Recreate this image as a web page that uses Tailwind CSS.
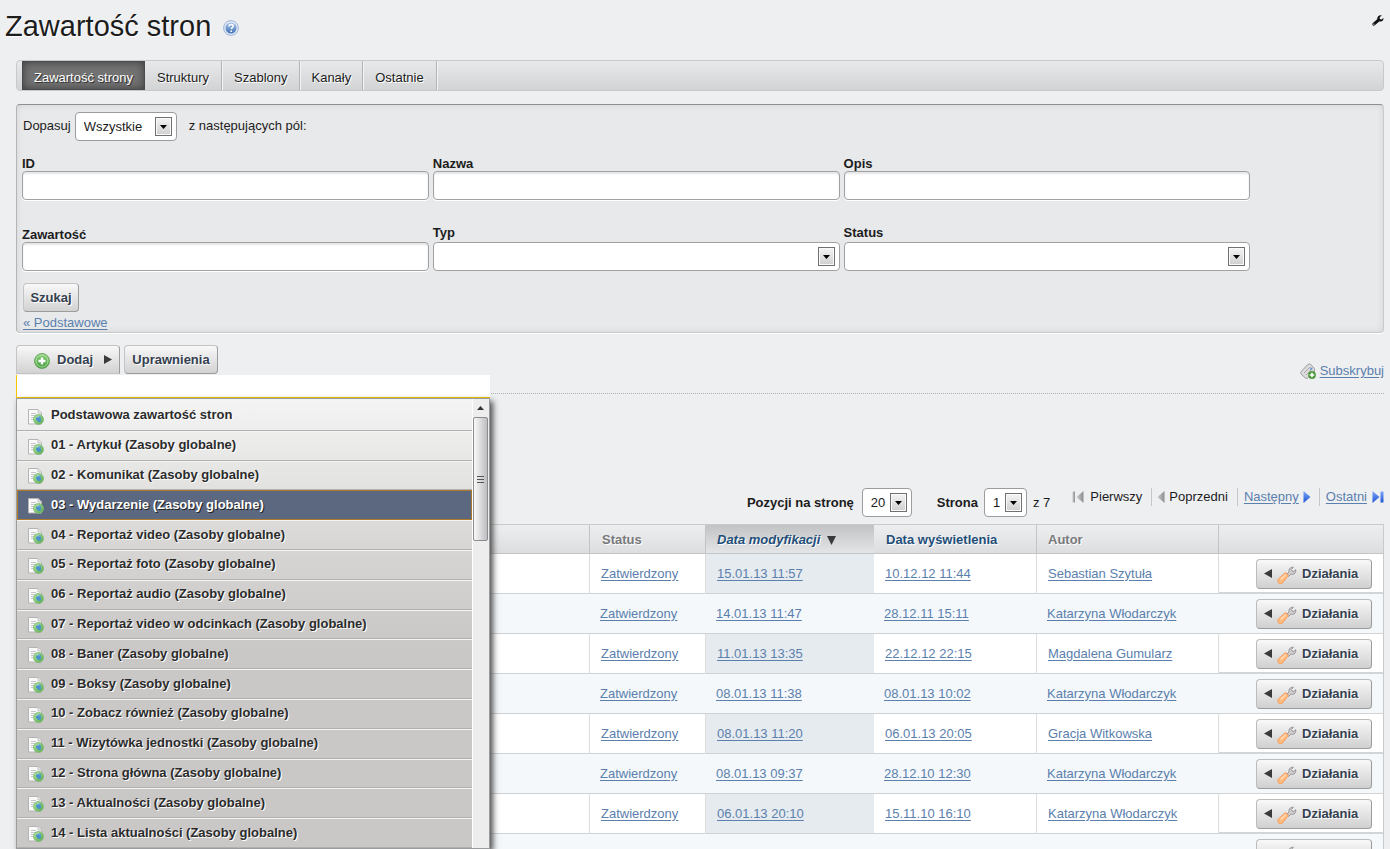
<!DOCTYPE html>
<html lang="pl">
<head>
<meta charset="utf-8">
<meta name="viewport" content="width=device-width, initial-scale=1">
<title>Zawartość stron</title>
<script src="https://cdn.jsdelivr.net/npm/@tailwindcss/browser@4"></script>
</head>
<body class="h-screen overflow-hidden bg-[#eeeff1] font-['Liberation_Sans',Arial,sans-serif] text-[13px] leading-4 text-[#1c1c1c]">

<svg width="0" height="0" class="absolute" aria-hidden="true">
  <defs>
    <linearGradient id="gBlue" x1="0" y1="0" x2="0" y2="1"><stop offset="0" stop-color="#a9c4e8"/><stop offset="1" stop-color="#4272b5"/></linearGradient>
    <linearGradient id="gGreen" x1="0" y1="0" x2="0" y2="1"><stop offset="0" stop-color="#8fd07c"/><stop offset="1" stop-color="#3f9a37"/></linearGradient>
    <linearGradient id="gGlobe" x1="0" y1="0" x2="1" y2="1"><stop offset="0" stop-color="#b4e4a0"/><stop offset="1" stop-color="#55a94e"/></linearGradient>
    <linearGradient id="gGrey" x1="0" y1="0" x2="1" y2="0"><stop offset="0" stop-color="#c9c9c9"/><stop offset="1" stop-color="#8e8e8e"/></linearGradient>
    <linearGradient id="gArrow" x1="0" y1="0" x2="0" y2="1"><stop offset="0" stop-color="#7fa9fa"/><stop offset="1" stop-color="#1d52cf"/></linearGradient>
  </defs>
  <symbol id="page" viewBox="0 0 16 16">
    <path d="M.5.5h9.500l3.500 3.500v11H.5z" fill="#fafafa" stroke="#b4b4b4"/>
    <path d="M10 .5V4h3.500" fill="#e8e8e8" stroke="#c4c4c4"/>
    <path d="M3 4.500h5M3 6.500h7M3 8.500h3M3 10.500h2" stroke="#c4c7ca"/>
    <circle cx="10.500" cy="10.500" r="5" fill="url(#gGlobe)" stroke="#7db974" stroke-width=".8"/>
    <path d="M10 7.500c1.800-.8 3 .5 2.700 1.600-.4 1 .8 1.800.2 2.900-.8 1.200-2.500 1.600-3.200.4-.3-.9-1.900-1-1.700-2.300.2-1.200 1-2 2-2.600z" fill="#4a8fd0"/>
    <path d="M9 8.500c.8-1 1.800-1 2.500-.3" stroke="#c7e8f5" stroke-width=".8" fill="none"/>
  </symbol>
  <symbol id="tool" viewBox="0 0 20 18">
    <path d="M9.500 8.500 12 6.200c-.6-2 .4-4.400 3-5 .6-.1 1 0 1.400.1l-1.900 2 .5 1.700 1.700.5 2-1.800c.6 2.300-.9 4.500-3.200 4.700-.7 0-1.200-.1-1.700-.3L11.500 10.500z" fill="#cfcfcf" stroke="#8d8d8d" stroke-width=".9"/>
    <path d="M1.600 12.800 7.600 7.200c1.400-1 4.200 1.500 3.200 3.100L5.700 16.700c-1.400 1.400-3.400 1.200-4.400-.2-.9-1.200-.8-2.600.3-3.700z" fill="#ffbd82" stroke="#f59a55"/>
    <path d="M3.500 13.500 8.500 9" stroke="#ffdcb8" stroke-width="1.300"/>
  </symbol>
  <symbol id="left" viewBox="0 0 8 9"><path d="M8 0v9L0 4.500z" fill="#3a3a3a"/></symbol>
</svg>

<header class="flex h-[60px] items-start justify-between pl-[5px] pr-[6px]">
  <div class="flex items-center gap-2 pt-[5px]">
    <h1 class="text-[29px] leading-[42px] [text-shadow:1px_1px_0_#fff]">Zawartość stron</h1>
    <a href="#" aria-label="Pomoc" class="mt-1 ml-1">
      <svg width="16" height="16" viewBox="0 0 16 16"><circle cx="8" cy="8" r="7.400" fill="#e4ecf6" stroke="#91acd2" stroke-width=".9"/><circle cx="8" cy="8" r="5.600" fill="url(#gBlue)"/><path d="M6 6.500C6 5.100 6.900 4.500 8.100 4.500c1.300 0 2.100.7 2.100 1.700 0 1.400-1.900 1.500-1.900 2.900" fill="none" stroke="#fff" stroke-width="1.500"/><circle cx="8.300" cy="11.200" r=".9" fill="#fff"/></svg>
    </a>
  </div>
  <button aria-label="Opcje" class="mt-[15px]">
    <svg width="12" height="11" viewBox="0 0 12 11"><path d="M1.900 9.200 6.200 5.400" stroke="#111" stroke-width="3" stroke-linecap="round"/><path d="M9.700.4C7.200-.3 4.900 1.600 5.300 4.100 5.700 6.300 8.200 7.200 10.200 5.900c1-.7 1.400-1.600 1.300-2.800L9.500 4.500 7.800 3.900l-.1-1.700z" fill="#111"/><circle cx="1.900" cy="9.200" r=".6" fill="#eee"/></svg>
  </button>
</header>

<main class="pl-4 pr-[6px]">
  <nav class="flex h-[31px] rounded-[4px] border border-[#c8c9ca] bg-linear-to-b from-[#e8e9ea] to-[#d2d3d4] pl-[5px] leading-[34px] [text-shadow:1px_1px_0_#fff]">
    <a href="#" class="border border-[#4b4b4b] bg-[#727272] px-[11px] leading-8 text-white shadow-[inset_0_0_9px_#3c3c3c] [text-shadow:1px_1px_0_#333]">Zawartość strony</a>
    <a href="#" class="border-r border-[#b3b4b5] px-3 shadow-[1px_0_0_#f4f4f4]">Struktury</a>
    <a href="#" class="border-r border-[#b3b4b5] px-3 shadow-[1px_0_0_#f4f4f4]">Szablony</a>
    <a href="#" class="border-r border-[#b3b4b5] px-[11px] shadow-[1px_0_0_#f4f4f4]">Kanały</a>
    <a href="#" class="border-r border-[#b3b4b5] px-3 shadow-[1px_0_0_#f4f4f4]">Ostatnie</a>
  </nav>

  <form class="mt-[13px] h-[229px] rounded-[4px] border border-[#c9cacb] border-t-[#8f9191] border-l-[#b4b5b6] bg-[#e8e9eb] px-[5px] pt-[7px] shadow-[inset_0_0_6px_#d2d3d4,0_1px_0_#fff]">
    <div class="flex items-start">
      <label for="match" class="mr-1 ml-[1px] pt-[6px]">Dopasuj</label>
      <div class="relative">
        <select id="match" class="h-[29px] w-[102px] appearance-none rounded-[4px] border border-[#9b9c9d] bg-white px-2 text-[13px] text-[#1c1c1c]"><option>Wszystkie</option></select>
        <span class="pointer-events-none absolute top-[5px] right-[5px] flex h-[19px] w-[17px] items-center justify-center border border-[#707070] bg-linear-to-b from-[#f4f4f4] to-[#cfcfcf] shadow-[inset_0_0_0_1px_#fafafa]"><svg width="7" height="4" viewBox="0 0 7 4"><path d="M0 0h7L3.500 4z"/></svg></span>
      </div>
      <span class="ml-3 pt-[6px]">z następujących pól:</span>
    </div>
    <div class="grid grid-cols-[30%_30%_30%] gap-x-1 gap-y-[26px] pt-[14px] font-bold">
      <div class="h-[45px]"><label for="fid" class="block h-4 leading-[18px]">ID</label><input id="fid" type="text" class="block h-[29px] w-full rounded-[4px] border border-[#a0a1a2] bg-white px-2 font-normal shadow-[inset_0_2px_2px_#e6e6e6,0_1px_0_#fff]"></div>
      <div class="h-[45px]"><label for="fname" class="block h-4 leading-[18px]">Nazwa</label><input id="fname" type="text" class="block h-[29px] w-full rounded-[4px] border border-[#a0a1a2] bg-white px-2 font-normal shadow-[inset_0_2px_2px_#e6e6e6,0_1px_0_#fff]"></div>
      <div class="h-[45px]"><label for="fdesc" class="block h-4 leading-[18px]">Opis</label><input id="fdesc" type="text" class="block h-[29px] w-full rounded-[4px] border border-[#a0a1a2] bg-white px-2 font-normal shadow-[inset_0_2px_2px_#e6e6e6,0_1px_0_#fff]"></div>
      <div class="h-[45px]"><label for="fcont" class="block h-4 leading-[18px]">Zawartość</label><input id="fcont" type="text" class="block h-[29px] w-full rounded-[4px] border border-[#a0a1a2] bg-white px-2 font-normal shadow-[inset_0_2px_2px_#e6e6e6,0_1px_0_#fff]"></div>
      <div class="relative h-[45px]"><label for="ftype" class="block h-4 leading-[14px]">Typ</label><select id="ftype" class="block h-[29px] w-full appearance-none rounded-[4px] border border-[#a0a1a2] bg-white px-2 font-normal"><option></option></select>
        <span class="pointer-events-none absolute right-[5px] bottom-[5px] flex h-[19px] w-[17px] items-center justify-center border border-[#707070] bg-linear-to-b from-[#f4f4f4] to-[#cfcfcf] shadow-[inset_0_0_0_1px_#fafafa]"><svg width="7" height="4" viewBox="0 0 7 4"><path d="M0 0h7L3.500 4z"/></svg></span></div>
      <div class="relative h-[45px]"><label for="fstat" class="block h-4 leading-[14px]">Status</label><select id="fstat" class="block h-[29px] w-full appearance-none rounded-[4px] border border-[#a0a1a2] bg-white px-2 font-normal"><option></option></select>
        <span class="pointer-events-none absolute right-[5px] bottom-[5px] flex h-[19px] w-[17px] items-center justify-center border border-[#707070] bg-linear-to-b from-[#f4f4f4] to-[#cfcfcf] shadow-[inset_0_0_0_1px_#fafafa]"><svg width="7" height="4" viewBox="0 0 7 4"><path d="M0 0h7L3.500 4z"/></svg></span></div>
    </div>
    <div class="flex flex-col items-start pt-3 pl-[1px]">
      <button type="button" class="h-[29px] w-14 rounded-[4px] border border-[#c4c4c4] border-r-[#9c9c9c] border-b-[#9c9c9c] bg-linear-to-b from-[#f8f8f8] to-[#d2d2d2] pt-px font-bold text-[#34404f] [text-shadow:1px_1px_0_#fff]">Szukaj</button>
      <a href="#" class="mt-[3px] text-[#5b80ad] underline underline-offset-2">« Podstawowe</a>
    </div>
  </form>

  <div class="relative mt-3 flex h-[49px] items-start justify-between border-b border-dotted border-[#b0b1b2] font-bold text-[#34404f]">
    <div class="flex gap-1">
      <button class="flex h-[29px] w-[104px] items-center rounded-t-[4px] border border-[#c4c4c4] border-r-[#9c9c9c] bg-linear-to-b from-[#f8f8f8] to-[#d2d2d2] pl-[17px] [text-shadow:1px_1px_0_#fff]">
        <svg width="16" height="16" viewBox="0 0 16 16" class="mt-[2px] mr-[7px]"><circle cx="8" cy="8" r="7.500" fill="url(#gGreen)" stroke="#5a9e52" stroke-width=".8"/><circle cx="8" cy="8" r="6" fill="none" stroke="#d4f0cb" stroke-width=".7"/><path d="M8 4.500v7M4.500 8h7" stroke="#fff" stroke-width="2.400"/></svg>
        Dodaj
        <svg width="8" height="9" viewBox="0 0 8 9" class="ml-[11px]"><path d="M0 0v9l8-4.500z" fill="#3a3a3a"/></svg>
      </button>
      <button class="h-[29px] w-[94px] rounded-[4px] border border-[#c4c4c4] border-r-[#9c9c9c] border-b-[#9c9c9c] bg-linear-to-b from-[#f8f8f8] to-[#d2d2d2] [text-shadow:1px_1px_0_#fff]">Uprawnienia</button>
    </div>
    <a href="#" class="mt-[18px] flex items-center gap-1 font-normal text-[#5b80ad] underline underline-offset-2">
      <svg width="16" height="16" viewBox="0 0 16 16"><path d="M.7 9.200 7.500 1.800 10 .8l4.500 4.700v3L7.500 15.200H5.500L1 10.800z" fill="#dcdcdc" stroke="#9a9a9a"/><path d="M4 10 10 4M6 12l6-6" stroke="#a6a6a6"/><circle cx="11.200" cy="5.800" r="1.300" fill="#6f9bd4"/><circle cx="12" cy="12" r="3.900" fill="#4f9a3d"/><path d="M12 9.700v4.600M9.700 12h4.600" stroke="#fff" stroke-width="1.600"/></svg>
      Subskrybuj
    </a>

    <div class="absolute top-[30px] left-0 z-10 w-[474px]">
      <input type="text" aria-label="Filtruj" class="block h-[23px] w-full border-b border-l border-[#f8c500] bg-white px-2">
      <div class="flex border border-[#9a9c9e] bg-[#ededed] shadow-[3px_3px_6px_#4c4c4c]">
        <ul id="menu" class="flex h-[449px] min-w-0 flex-1 flex-col bg-linear-to-b from-[#f4f4f4] from-0% via-[#d5d4d2] via-35% to-[#cac8c7] to-55% pt-[2px] [text-shadow:1px_1px_0_#fff]"></ul>
        <div class="w-[17px] border-l border-white pt-[7px]">
          <svg width="7" height="4" viewBox="0 0 7 4" class="ml-1"><path d="M0 4h7L3.500 0z" fill="#333"/></svg>
          <div class="mt-[7px] flex h-[124px] w-[15px] flex-col items-center justify-center gap-[2px] rounded-[2px] border border-[#8c8c8f] bg-linear-to-r from-[#f8f8f8] via-[#dcdcde] to-[#bdbdc2]">
            <i class="h-px w-[7px] bg-[#555]"></i><i class="h-px w-[7px] bg-[#555]"></i><i class="h-px w-[7px] bg-[#555]"></i>
          </div>
        </div>
      </div>
    </div>
  </div>

  <div class="mt-[94px] flex h-[36px] items-start justify-end">
    <label for="per" class="mr-2 pt-[7px] font-bold">Pozycji na stronę</label>
    <div class="relative">
      <select id="per" class="h-[29px] w-[50px] appearance-none rounded-[4px] border border-[#9b9c9d] bg-white pl-2"><option>20</option></select>
      <span class="pointer-events-none absolute top-[5px] right-[5px] flex h-[19px] w-[17px] items-center justify-center border border-[#707070] bg-linear-to-b from-[#f4f4f4] to-[#cfcfcf] shadow-[inset_0_0_0_1px_#fafafa]"><svg width="7" height="4" viewBox="0 0 7 4"><path d="M0 0h7L3.500 4z"/></svg></span>
    </div>
    <label for="pg" class="mr-[6px] ml-[25px] pt-[7px] font-bold">Strona</label>
    <div class="relative">
      <select id="pg" class="h-[29px] w-[43px] appearance-none rounded-[4px] border border-[#9b9c9d] bg-white pl-2"><option>1</option></select>
      <span class="pointer-events-none absolute top-[5px] right-[5px] flex h-[19px] w-[17px] items-center justify-center border border-[#707070] bg-linear-to-b from-[#f4f4f4] to-[#cfcfcf] shadow-[inset_0_0_0_1px_#fafafa]"><svg width="7" height="4" viewBox="0 0 7 4"><path d="M0 0h7L3.500 4z"/></svg></span>
    </div>
    <span class="ml-[6px] pt-[7px]">z 7</span>
    <div class="ml-[22px] flex items-center">
      <svg width="12" height="12" viewBox="0 0 12 12" class="mr-[6px]"><path d="M.5.500h2.500v11H.5z" fill="url(#gGrey)"/><path d="M11.500 0v12L4.500 6z" fill="url(#gGrey)"/></svg>
      <span class="mr-[9px]">Pierwszy</span>
      <span class="flex h-[18px] items-center border-l border-[#c6c7c8] pr-[9px] pl-[5px]"><svg width="8" height="12" viewBox="0 0 8 12" class="mr-1"><path d="M7.500 0v12L.5 6z" fill="url(#gGrey)"/></svg>Poprzedni</span>
      <span class="flex h-[18px] items-center border-l border-[#c6c7c8] pr-2 pl-[6px]"><a href="#" class="mr-1 text-[#5b80ad] underline underline-offset-2">Następny</a><svg width="8" height="12" viewBox="0 0 8 12"><path d="M.500 0v12l7-6z" fill="url(#gArrow)"/></svg></span>
      <span class="flex h-[18px] items-center border-l border-[#c6c7c8] pl-[6px]"><a href="#" class="mr-[5px] text-[#5b80ad] underline underline-offset-2">Ostatni</a><svg width="12" height="12" viewBox="0 0 12 12"><path d="M.500 0v12l7-6zM8.500.500h3v11h-3z" fill="url(#gArrow)"/></svg></span>
    </div>
  </div>

  <table class="w-full table-fixed border-separate border-spacing-0 border-t border-r border-[#c9cacb] text-left">
    <thead>
      <tr class="h-[29px] bg-linear-to-b from-[#edeef0] to-[#dcdddf] text-[#77797b] [text-shadow:1px_1px_0_#fff]">
        <th class="border-r border-b border-[#c3c4c5]"></th>
        <th class="w-[116px] border-r border-b border-[#c3c4c5] pt-[2px] pl-3">Status</th>
        <th class="w-[168px] border-b border-[#c3c4c5] bg-linear-to-b from-[#c2c3c4] to-[#e4e5e6] pt-[2px] pl-[11px] text-[#1f4e79] italic"><a href="#">Data modyfikacji</a> <svg width="9" height="9" viewBox="0 0 9 9" class="ml-[3px] inline-block"><path d="M0 0h9L4.500 9z" fill="#3a3a3a"/></svg></th>
        <th class="w-[163px] border-r border-b border-[#c3c4c5] pt-[2px] pl-3 text-[#1f4e79]"><a href="#">Data wyświetlenia</a></th>
        <th class="w-[182px] border-r border-b border-[#c3c4c5] pt-[2px] pl-[11px]">Autor</th>
        <th class="w-[164px] border-b border-[#c3c4c5]"></th>
      </tr>
    </thead>
    <tbody id="rows" class="text-[#5b80ad]"></tbody>
  </table>
</main>

<script>
const items = ["Podstawowa zawartość stron","01 - Artykuł (Zasoby globalne)","02 - Komunikat (Zasoby globalne)","03 - Wydarzenie (Zasoby globalne)","04 - Reportaż video (Zasoby globalne)","05 - Reportaż foto (Zasoby globalne)","06 - Reportaż audio (Zasoby globalne)","07 - Reportaż video w odcinkach (Zasoby globalne)","08 - Baner (Zasoby globalne)","09 - Boksy (Zasoby globalne)","10 - Zobacz również (Zasoby globalne)","11 - Wizytówka jednostki (Zasoby globalne)","12 - Strona główna (Zasoby globalne)","13 - Aktualności (Zasoby globalne)","14 - Lista aktualności (Zasoby globalne)"];
const normal = "flex min-h-0 flex-1 border-b border-[#b0b0b0] shadow-[inset_0_1px_0_#f4f4f4] text-[#2b2b2b]";
const active = "flex min-h-0 flex-1 border-b border-[#b07a2b] shadow-[inset_0_1px_0_#b07a2b,inset_1px_0_0_#b07a2b,inset_-1px_0_0_#b07a2b] bg-[#5c687f] text-white [text-shadow:1px_1px_0_#222]";
document.getElementById("menu").innerHTML = items.map((t, i) =>
  `<li class="${i === 3 ? active : normal}"><a href="#" class="flex flex-1 items-center gap-[7px] pl-[11px]"><svg width="16" height="16" class="mt-[3px]"><use href="#page"/></svg><span>${t}</span></a></li>`).join("");

const data = [["15.01.13 11:57","10.12.12 11:44","Sebastian Szytuła"],["14.01.13 11:47","28.12.11 15:11","Katarzyna Włodarczyk"],["11.01.13 13:35","22.12.12 22:15","Magdalena Gumularz"],["08.01.13 11:38","08.01.13 10:02","Katarzyna Włodarczyk"],["08.01.13 11:20","06.01.13 20:05","Gracja Witkowska"],["08.01.13 09:37","28.12.10 12:30","Katarzyna Włodarczyk"],["06.01.13 20:10","15.11.10 16:10","Katarzyna Włodarczyk"],["04.01.13 12:13","04.01.13 12:01","Aleksandra Łukasik"]];
const odd = {tr:"h-10 bg-white", td:"border-r border-b border-[#dcdddd] border-b-[#cfd2d4] pl-[11px]", mod:"border-b border-[#cfd2d4] bg-[#e6ebef] pl-[11px]", last:"border-b-2 border-[#d3d4d5] pt-px pr-[11px]"};
const alt = {tr:"h-10 bg-[#f4f8fb]", td:"border-b border-[#cfd2d4] pl-[10px]", mod:"border-b border-[#cfd2d4] pl-[10px]", last:"border-b border-[#d3d4d5] pr-[11px]"};
const link = t => `<a href="#" class="underline underline-offset-2">${t}</a>`;
document.getElementById("rows").innerHTML = data.map((r, i) => {
  const c = i % 2 ? alt : odd;
  return `<tr class="${c.tr}"><td class="${c.td}"></td><td class="${c.td}">${link("Zatwierdzony")}</td><td class="${c.mod}">${link(r[0])}</td><td class="${c.td}">${link(r[1])}</td><td class="${c.td}">${link(r[2])}</td><td class="${c.last}"><button class="ml-auto flex h-[30px] w-[116px] items-center rounded-[4px] border border-[#bcbcbc] border-r-[#9c9c9c] border-b-[#9c9c9c] bg-linear-to-b from-[#f8f8f8] to-[#d0d0d0] pl-[7px] font-bold text-[#34404f] [text-shadow:1px_1px_0_#fff]"><svg width="8" height="9" class="mr-[5px]"><use href="#left"/></svg><svg width="20" height="18" class="mt-[2px] mr-[5px]"><use href="#tool"/></svg>Działania</button></td></tr>`;
}).join("");
</script>
</body>
</html>
